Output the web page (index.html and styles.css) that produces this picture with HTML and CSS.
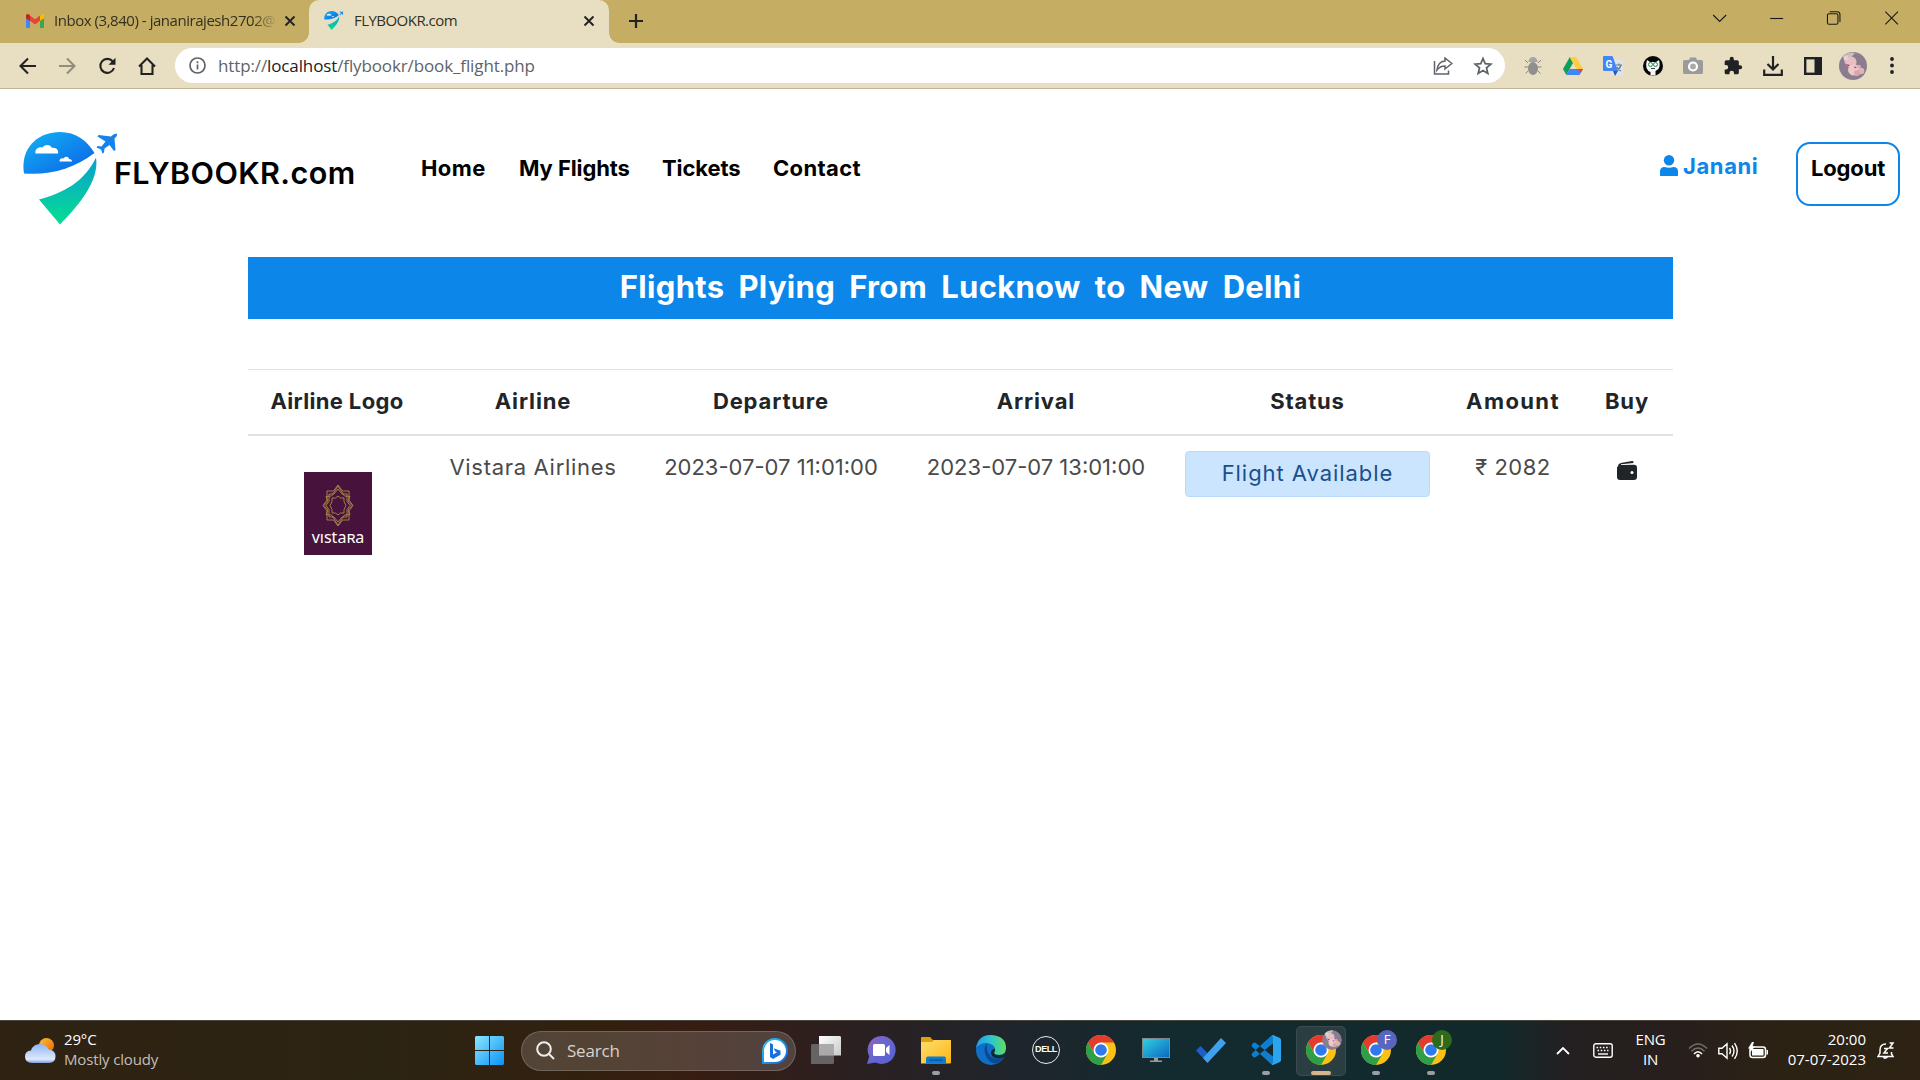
FILE: index.html
```html
<!DOCTYPE html>
<html lang="en">
<head>
<meta charset="utf-8">
<title>FLYBOOKR.com</title>
<link rel="stylesheet" href="styles.css">
</head>
<body>
<svg class="defs" width="0" height="0" aria-hidden="true">
  <defs>
    <linearGradient id="sky" x1="0" y1="0" x2="1" y2="1"><stop offset="0" stop-color="#12b4f5"/><stop offset="1" stop-color="#0b5fe6"/></linearGradient>
    <linearGradient id="sea" x1="0" y1="0" x2="0" y2="1"><stop offset="0" stop-color="#0a9fce"/><stop offset="1" stop-color="#05df92"/></linearGradient>
    <linearGradient id="win" x1="0" y1="0" x2="1" y2="1"><stop offset="0" stop-color="#8be6ff"/><stop offset="1" stop-color="#0a93f5"/></linearGradient>
    <linearGradient id="sun" x1="0" y1="0" x2="1" y2="1"><stop offset="0" stop-color="#f9c02d"/><stop offset="1" stop-color="#ee6410"/></linearGradient>
    <linearGradient id="cloud" x1="0" y1="0" x2="0" y2="1"><stop offset="0" stop-color="#8fb4f3"/><stop offset=".8" stop-color="#dfeafc"/><stop offset="1" stop-color="#7c9ee0"/></linearGradient>
    <linearGradient id="bing" x1="0" y1="0" x2="1" y2="1"><stop offset="0" stop-color="#27c5f3"/><stop offset="1" stop-color="#1560d8"/></linearGradient>
    <linearGradient id="chat" x1="0" y1="0" x2="1" y2="1"><stop offset="0" stop-color="#9a63bb"/><stop offset=".4" stop-color="#6b66cf"/><stop offset="1" stop-color="#5560d6"/></linearGradient>
    <linearGradient id="folder" x1="0" y1="0" x2="1" y2="1"><stop offset="0" stop-color="#ffdd70"/><stop offset="1" stop-color="#fcb713"/></linearGradient>
    <linearGradient id="edge" x1="0" y1="0" x2="1" y2="0"><stop offset="0" stop-color="#1da0e2"/><stop offset=".5" stop-color="#2fc4d0"/><stop offset="1" stop-color="#5fe05a"/></linearGradient>
    <linearGradient id="screen" x1="0" y1="0" x2="1" y2="1"><stop offset="0" stop-color="#32d3dc"/><stop offset="1" stop-color="#0a66c4"/></linearGradient>
    <linearGradient id="pane" x1="0" y1="0" x2="1" y2="1"><stop offset="0" stop-color="#ffffff"/><stop offset="1" stop-color="#c9c9c9"/></linearGradient>
    <symbol id="flylogo" viewBox="0 0 96 93">
      <path fill="url(#sky)" d="M1 41.500C-3 17 14 0 37 0c16 0 27.500 9 34.500 21C50 37 27 43.500 1 41.500z"/>
      <path fill="url(#sea)" d="M73 25.500C77 50 53 76 37 92.500L16 67.500C41 61 62 49 73 25.500z"/>
      <path fill="#fff" d="M12.500 21.500c-1-4 3-7 7-6 3-3.500 8-3 9.500.5 4-1 7 2.500 6 5.500zM36.500 29.500c0-3 2-3.500 4-3 2-2.500 5-2 5.500.5 2 0 3 1 3 2.500z"/>
      <path fill="#1583ea" d="M95.500 1.500c-3-.5-5 .5-7.500 3L75.500 3l-1 1.500 8 5-4 5-4-.5-1 1.500 4.500 2 1.500 4 1.500-1 .5-4 5-3.500 4.500 6 1.500-1-1-11.500c2-2 3-3 2.500-5z"/>
    </symbol>
    <symbol id="chrome" viewBox="0 0 48 48">
      <circle cx="24" cy="24" r="24" fill="#fbc116"/>
      <path fill="#e33b2e" d="M3.200 12A24 24 0 0 1 44.800 12H24L13.600 30z"/>
      <path fill="#2f9e48" d="M3.200 12A24 24 0 0 0 24 48L34.400 30 13.600 30z"/>
      <circle cx="24" cy="24" r="12" fill="#fff"/><circle cx="24" cy="24" r="9.300" fill="#2f78ee"/>
    </symbol>
    <symbol id="x" viewBox="0 0 12 12"><path d="M1.500 1.500l9 9m0-9l-9 9" stroke="#222" stroke-width="1.900"/></symbol>
    <symbol id="avatar" viewBox="0 0 28 28">
      <circle cx="14" cy="14" r="14" fill="#8b7d8f"/><path d="M4 4q6-5 12-3L6 12z" fill="#c9bfb8"/>
      <circle cx="12" cy="10" r="5.500" fill="#e6bfc2"/><circle cx="7" cy="6" r="2.400" fill="#e9cfd0"/><ellipse cx="15.500" cy="18" rx="6.500" ry="5.500" fill="#eccacc"/><circle cx="22" cy="19" r="3.300" fill="#e3b3b6"/><circle cx="18" cy="21" r="3" fill="#dba6aa"/><circle cx="20" cy="14.500" r="1.800" fill="#e2adb2"/><path d="M7 12l4 1-2 1.500zM15 14.500l3 .5-2 1.500z" fill="#b7366b"/>
    </symbol>
  </defs>
</svg>

<div class="tabstrip">
  <div class="tab tab-idle">
    <svg width="18" height="14" viewBox="0 0 18 14"><path fill="#4285f4" d="M0 3h4v11H1.200Q0 14 0 12.800z"/><path fill="#34a853" d="M14 3h4v9.800q0 1.200-1.200 1.200H14z"/><path fill="#ea4335" d="M2 0l7 5.200L16 0l-1 6-6 4.500L3 6z"/><path fill="#c5221f" d="M0 2q0-3 3-1.500L4 1.500V7L0 4.200z"/><path fill="#fbbc04" d="M18 2q0-3-3-1.500l-1 1V7l4-2.800z"/></svg>
    <span class="tab-title fade">Inbox (3,840) - jananirajesh2702@</span>
    <svg width="12" height="12"><use href="#x"/></svg>
  </div>
  <div class="tab tab-active">
    <svg width="20" height="19"><use href="#flylogo"/></svg>
    <span class="tab-title">FLYBOOKR.com</span>
    <svg width="12" height="12"><use href="#x"/></svg>
  </div>
  <svg class="newtab" width="16" height="16" viewBox="0 0 16 16"><path d="M8 1v14M1 8h14" stroke="#222" stroke-width="2.200"/></svg>
  <div class="winctl">
    <svg width="14" height="14" viewBox="0 0 14 14"><path d="M.5 4L7 10.500 13.500 4"/></svg>
    <svg width="14" height="14" viewBox="0 0 14 14"><path d="M.5 7.500h13"/></svg>
    <svg width="14" height="14" viewBox="0 0 14 14"><rect x=".8" y="2.700" width="10.500" height="10.500" rx="1.500"/><path d="M3 .7h7.500q2.800 0 2.800 2.800V11"/></svg>
    <svg width="14" height="14" viewBox="0 0 14 14"><path d="M.7.700l12.600 12.600M13.300.7L.7 13.300"/></svg>
  </div>
</div>

<div class="toolbar">
  <div class="navbtns">
    <svg width="18" height="18" viewBox="0 0 18 18"><path d="M17 9H2M9 1.500L1.500 9 9 16.500"/></svg>
    <svg class="dim" width="18" height="18" viewBox="0 0 18 18"><path d="M1 9h15M9 1.500L16.500 9 9 16.500"/></svg>
    <svg width="18" height="18" viewBox="0 0 18 18"><path d="M14.800 4.500A7 7 0 1 0 16 11"/><path d="M17.500.8v7h-7z" fill="#222" stroke="none"/></svg>
    <svg width="18" height="18" viewBox="0 0 18 18"><path d="M3.500 8v9h11V8M1 9.500L9 1.500l8 8"/></svg>
  </div>
  <div class="omnibox">
    <svg width="17" height="17" viewBox="0 0 17 17" fill="none" stroke="#5f6368" stroke-width="1.700"><circle cx="8.500" cy="8.500" r="7.500"/><path d="M8.500 7.500v5M8.500 4.300v1.900"/></svg>
    <span class="url">http://<b>localhost</b>/flybookr/book_flight.php</span>
    <svg width="20" height="18" viewBox="0 0 20 18" fill="none" stroke="#5f6368" stroke-width="1.500"><path d="M1.500 4v13h14v-3.500M12 1l6.800 5.500L12 12V9q-5 0-8 4Q5 4.500 12 4z"/></svg>
    <svg width="20" height="20" viewBox="0 0 20 20" fill="none" stroke="#5f6368" stroke-width="1.800"><path d="M10 2.500l2.200 5.200 5.600.5-4.300 3.700 1.300 5.500-4.800-2.900-4.800 2.900 1.300-5.500L2.200 8.200l5.600-.5z"/></svg>
  </div>
  <div class="exts">
    <svg width="20" height="20" viewBox="0 0 20 20"><path d="M2 4l3 3M18 4l-3 3M1.500 11h17M2.500 17.500l3-3M17.500 17.500l-3-3" stroke="#8b857a"/><ellipse cx="10" cy="12.500" rx="5" ry="6.500" fill="#8f8f8f"/><path d="M5.500 6a4.500 5 0 0 1 9 0z" fill="#a5a5a5"/></svg>
    <svg width="20" height="18" viewBox="0 0 20 18"><path fill="#109d59" d="M6.800 0L0 12l3.300 6L10 6z"/><path fill="#ffcd40" d="M6.800 0h6.400L20 12h-6.500z"/><path fill="#4285f4" d="M3.300 18L6.700 12H20l-3.400 6z"/><path fill="#ea4335" d="M13.500 12H20l-2 3.500z"/></svg>
    <svg width="20" height="20" viewBox="0 0 20 20"><rect x="8" y="4" width="12" height="15" fill="#dfe3e6"/><path d="M13 9h6M16 7.500V9m2 0q-1 4-5 6m1-4q1 3 4 4" stroke="#607d8b" fill="none" stroke-width="1.200"/><path d="M0 1q0-1 1-1h8.500l5.500 15H1q-1 0-1-1z" fill="#4285f4"/><path d="M10 15h5l-3 5z" fill="#3553a8"/><text x="2.500" y="12" class="gt">G</text></svg>
    <svg width="20" height="20" viewBox="0 0 20 20"><circle cx="10" cy="10" r="10" fill="#070707"/><path d="M4 4l3 2h6l3-2q1.500 6-.5 9l-3 2v4.500h-5V16q-3-1-4-4Q2.500 8 4 4z" fill="#f6f6f6"/><circle cx="7.500" cy="8.500" r="2" fill="none" stroke="#2e8b4d"/><circle cx="12.500" cy="8.500" r="2" fill="none" stroke="#2e8b4d"/><path d="M8 12.500h4" stroke="#444"/></svg>
    <svg width="20" height="18" viewBox="0 0 20 18"><path d="M1.500 3H6l1-2.500h6L14 3h4.500Q20 3 20 4.500v11q0 1.500-1.500 1.500h-17Q0 17 0 15.500v-11Q0 3 1.500 3z" fill="#9c9b9b"/><circle cx="10" cy="9.500" r="4" fill="#aaa" stroke="#fff" stroke-width="2.200"/></svg>
    <svg width="20" height="20" viewBox="0 0 24 24"><path fill="#202124" d="M20.500 11H19V7a2 2 0 0 0-2-2h-4V3.500a2.500 2.500 0 0 0-5 0V5H4a2 2 0 0 0-2 2v3.800h1.500a2.700 2.700 0 0 1 0 5.400H2V20a2 2 0 0 0 2 2h3.800v-1.500a2.700 2.700 0 0 1 5.400 0V22H17a2 2 0 0 0 2-2v-4h1.500a2.500 2.500 0 0 0 0-5z"/></svg>
    <svg width="20" height="20" viewBox="0 0 20 20" fill="none" stroke="#202124" stroke-width="2.200"><path d="M10 0v13M4.500 8l5.500 5.500L15.500 8M1.200 13.500v5.300h17.600v-5.300"/></svg>
    <svg width="18" height="18" viewBox="0 0 18 18"><rect x="1.200" y="1.200" width="15.600" height="15.600" fill="none" stroke="#202124" stroke-width="2.400"/><path d="M10.500 1h6v16h-6z" fill="#202124"/></svg>
    <svg width="28" height="28"><use href="#avatar"/></svg>
    <svg width="4" height="17" viewBox="0 0 4 17" fill="#202124"><circle cx="2" cy="2" r="1.900"/><circle cx="2" cy="8.500" r="1.900"/><circle cx="2" cy="15" r="1.900"/></svg>
  </div>
</div>

<main class="page">
  <header class="site-head">
    <svg class="logo" width="96" height="93"><use href="#flylogo"/></svg>
    <div class="brand">FLYBOOKR.com</div>
    <nav class="menu"><a class="home">Home</a><a class="my">My Flights</a><a class="tick">Tickets</a><a class="cont">Contact</a></nav>
    <div class="user"><svg width="18" height="21" viewBox="0 0 18 21" fill="#0d86ea"><circle cx="9" cy="5.300" r="5.200"/><path d="M0 20.500v-4q0-4.500 4.500-4.500Q9 13.500 13.500 12q4.500 0 4.500 4.500v4q0 .5-1 .5H1q-1 0-1-.5z"/></svg>Janani</div>
    <div class="logout">Logout</div>
  </header>
  <section class="results">
    <h1 class="banner">Flights Plying From Lucknow to New Delhi</h1>
    <table class="flights">
      <colgroup><col class="c1"><col class="c2"><col class="c3"><col class="c4"><col class="c5"><col class="c6"><col class="c7"></colgroup>
      <thead><tr><th class="snug">Airline Logo</th><th>Airline</th><th>Departure</th><th>Arrival</th><th>Status</th><th class="wide">Amount</th><th>Buy</th></tr></thead>
      <tbody><tr>
        <td>
          <svg class="airline-logo" width="68" height="83" viewBox="0 0 68 83"><rect width="68" height="83" fill="#47133c"/>
            <g fill="none" stroke="#b08a45" stroke-width=".9"><path d="M34 13l4.500 6h6.500v9l4 5.500-4 5.500v9h-6.500L34 54l-4.500-6H23v-9l-4-5.500 4-5.500v-9h6.500z"/><path d="M34 17l4 5h5v7.500l3 4-3 4V45h-5l-4 5-4-5h-5v-7.500l-3-4 3-4V22h5z"/><path d="M34 14l-6.500 10-5.500.5 2 4.500-4 4.500 4 4.500-2 4.500 5.500.5L34 53l6.500-10 5.500-.5-2-4.500 4-4.500-4-4.500 2-4.500-5.500-.5z"/><path d="M34 24l2.500 2H40v3.500l2 4-2 4V41h-3.500L34 43l-2.500-2H28v-3.500l-2-4 2-4V26h3.500z"/></g>
            <text x="34" y="71" class="vistara">vıstaʀa</text></svg>
        </td>
        <td class="name">Vistara Airlines</td><td>2023-07-07 11:01:00</td><td>2023-07-07 13:01:00</td>
        <td><div class="badge">Flight Available</div></td>
        <td class="amount">₹ 2082</td>
        <td><svg class="wallet" width="20" height="19" viewBox="0 0 20 19"><path fill="#212529" d="M1 5.500Q1 2.500 5 1.800L15 .1q1.500-.2 1.500 1.400L16.500 2 4 3.300v.7L17 3.700q3 0 3 3V16q0 3-3 3H3q-3 0-3-3V6z"/><circle cx="15" cy="11.500" r="1.500" fill="#fff"/></svg></td>
      </tr></tbody>
    </table>
  </section>
</main>

<footer class="taskbar">
  <div class="weather">
    <svg width="31" height="26" viewBox="0 0 31 26"><circle cx="21.500" cy="7.500" r="7.500" fill="url(#sun)"/><path fill="url(#cloud)" d="M7 25q-7 0-7-6.500Q0 13 6 12.500 8 6 15 6q6 0 8.500 5.500 7 .5 7 7T24 25z"/></svg>
    <div class="lift"><div>29°C</div><div class="soft">Mostly cloudy</div></div>
  </div>
  <svg class="start" width="29" height="29" viewBox="0 0 29 29"><path fill="url(#win)" d="M1 0h13v14H0V1zM15 0h13l1 1v13H15zM0 15h14v14H1l-1-1zM15 15h14v13l-1 1H15z"/></svg>
  <div class="search">
    <svg width="19" height="19" viewBox="0 0 19 19" fill="none" stroke="#eee" stroke-width="2"><circle cx="8" cy="8" r="6.800"/><path d="M13 13l5 5"/></svg>
    <span>Search</span>
    <svg width="26" height="26" viewBox="0 0 26 26"><path d="M1 25V13A12 12 0 1 1 13 25z" fill="#fff" stroke="url(#bing)" stroke-width="2"/><path fill="#1a6fe0" d="M8 5l3 1.200v10.300l4-2.200-2-1-1.200-3 6.700 2.500v4L11 21l-3-2z"/></svg>
  </div>
  <div class="apps">
    <div class="app"><svg width="30" height="28" viewBox="0 0 30 28"><path d="M8 0h21l1 1v18.500H8z" fill="url(#pane)"/><path d="M1 8h22v19l-1 1H0V9z" fill="#707070" opacity=".85"/><path d="M8 8h15v11.500H8z" fill="#aaa"/></svg></div>
    <div class="app"><svg width="29" height="28" viewBox="0 0 29 28"><path fill="url(#chat)" d="M14.500 0a14 14 0 1 1-6 26.600L0 28l2.200-7.500A14 14 0 0 1 14.500 0z"/><rect x="6" y="8" width="12" height="12" rx="1.500" fill="#fff"/><path d="M19 12l3.500-3v10L19 16z" fill="#fff"/></svg></div>
    <div class="app run"><svg width="30" height="27" viewBox="0 0 30 27"><path d="M0 1q0-1 1-1h8l3 3H29q1 0 1 1v6H0z" fill="#e0a008"/><path d="M0 5h11l2-2h16.500l.5.500V26l-1 .5H0z" fill="url(#folder)"/><path d="M5 26.500v-5q0-2 2-2h16q2 0 2 2v5z" fill="#0c7bd4"/><path d="M8.500 23h13" stroke="#0a4f94" stroke-width="1.300"/></svg></div>
    <div class="app"><svg width="30" height="30" viewBox="0 0 30 30"><circle cx="15" cy="15" r="15" fill="#0f6fc8"/><path fill="url(#edge)" d="M0 13Q2 0 15 0q15 1 15 13 0 7-7 7-5 0-5-2.500 1.500-2 1-4Q18 9 11 8 4 8 0 13z"/><path fill="#0b4b96" d="M11 8q-4 5-1.500 12t9 8.500q6-.5 9-6-7 3-12-.5Q9.500 17 11 8z"/><path fill="#112b30" d="M30 14q0 6-7 6-5 0-5-2.500 1.500-2 1-4Q14 15 15 19q2 5 9 4.500 4-1 6-2z"/></svg></div>
    <div class="app dell"><span>DELL</span></div>
    <div class="app"><svg width="30" height="30"><use href="#chrome"/></svg></div>
    <div class="app"><svg width="28" height="24" viewBox="0 0 28 24"><rect x=".5" y=".5" width="27" height="19" fill="url(#screen)" stroke="#7c8a90"/><path d="M12 20h4v2.500h4V24H8v-1.500h4z" fill="#9a9a9a"/></svg></div>
    <div class="app"><svg width="30" height="25" viewBox="0 0 30 25"><path d="M0 12.500L4.500 8 12 15.500l-1 9z" fill="#1f5fc4"/><path d="M7 20L25 0l5 5-18.500 20z" fill="#3fa0ee"/></svg></div>
    <div class="app run"><svg width="30" height="30" viewBox="0 0 30 30"><path fill="#0e7fcf" d="M22 0l-2 1L.8 18.500v2L3 22.500l1.500-.3L22 8.500zM22 30l-2-1L.8 11.500v-2L3 7.500l1.500.3L22 21.500z"/><path fill="#2aa5ee" d="M22 0l7 3 1 1.500v21L29 27l-7 3q-1 0-1.500-1 1.500 0 1.500-2V3q0-2-1.500-2z"/></svg></div>
    <div class="app run current"><svg width="30" height="30"><use href="#chrome"/></svg><svg class="who" width="20" height="20"><use href="#avatar" width="20" height="20"/></svg></div>
    <div class="app run"><svg width="30" height="30"><use href="#chrome"/></svg><span class="who who-f">F</span></div>
    <div class="app run"><svg width="30" height="30"><use href="#chrome"/></svg><span class="who who-j">J</span></div>
  </div>
  <div class="tray">
    <svg class="chev" width="14" height="9" viewBox="0 0 14 9" fill="none" stroke="#fff" stroke-width="1.800"><path d="M1 8l6-6 6 6"/></svg>
    <svg class="kbd" width="20" height="15" viewBox="0 0 20 15" fill="none" stroke="#fff" stroke-width="1.400"><rect x=".8" y=".8" width="18.400" height="13.400" rx="2"/><path d="M3.500 4.500h13M4.500 7.500h11" stroke-dasharray="1.600 1.600"/><path d="M5 11h10"/></svg>
    <div class="lang lift">ENG<br>IN</div>
    <svg class="wifi" width="20" height="15" viewBox="0 0 20 15" fill="none" stroke="#fff" stroke-width="1.500"><path d="M1 5.500q9-9 18 0M3.500 8.300q6.500-6.500 13 0" opacity=".35"/><path d="M6 11q4-4.500 8 0"/><circle cx="10" cy="12.700" r="1.800" fill="#fff" stroke="none"/></svg>
    <svg class="vol" width="20" height="18" viewBox="0 0 20 18" fill="none" stroke="#fff" stroke-width="1.400"><path d="M.8 6.200H4L9 1.800v14.400L4 11.800H.8zM11.500 6q2 3 0 6M14 3.500q4 5.500 0 11M16.500 1.200q5.500 7.800 0 15.600"/></svg>
    <svg class="batt" width="21" height="17" viewBox="0 0 21 17"><rect x="2" y="5" width="15.500" height="10.500" rx="2.500" fill="none" stroke="#fff" stroke-width="1.500"/><rect x="4" y="7" width="11.500" height="6.500" fill="#fff"/><path d="M18.500 8h1.500v4.500h-1.500zM4 0L0 6.500h2.500L1.500 11 7 4.500H4.500L6 0z" fill="#fff"/></svg>
    <div class="clock lift">20:00<br>07-07-2023</div>
    <svg class="bell" width="18" height="18" viewBox="0 0 18 18" fill="none" stroke="#fff" stroke-width="1.500"><path d="M9 2Q3 2 3 8v3l-2 3.500h15L14.500 12v-2M6.500 15q1 2.500 4 0M7 6.500h3.500L7 11h4M12.500 1H16l-3.500 5h4"/></svg>
  </div>
</footer>
</body>
</html>
```

FILE: styles.css
```css
* { box-sizing: border-box; }
html, body { height: 100%; }
body {
  margin: 0;
  display: flex;
  flex-direction: column;
  height: 1080px;
  overflow: hidden;
  background: #fff;
  font-family: Inter, "Noto Sans", sans-serif;
}
svg { display: block; flex: none; }
.defs { position: absolute; }

/* Browser tab strip */
.tabstrip {
  flex: none;
  display: flex;
  height: 43px;
  background: #c5ae64;
  font-family: "Open Sans", "Noto Sans", sans-serif;
}
.tab { display: flex; align-items: center; padding-bottom: 2px; }
.tab-idle { width: 309px; padding-left: 26px; }
.tab-active {
  position: relative;
  width: 300px;
  padding-left: 15px;
  background: #e8dfc3;
  border-radius: 10px 10px 0 0;
}
.tab-active::before, .tab-active::after {
  content: "";
  position: absolute;
  bottom: 0;
  width: 10px;
  height: 10px;
}
.tab-active::before { left: -10px; background: radial-gradient(circle at 0 0, transparent 9.500px, #e8dfc3 10px); }
.tab-active::after { right: -10px; background: radial-gradient(circle at 100% 0, transparent 9.500px, #e8dfc3 10px); }
.tab-title {
  flex: none;
  width: 226px;
  margin: 0 4px 0 10px;
  padding-bottom: 2px;
  white-space: nowrap;
  font-size: 15px;
  line-height: 20px;
  letter-spacing: -.46px;
  color: #33301f;
}
.tab-active .tab-title { width: 219px; margin: 0 10px; letter-spacing: -.54px; }
.fade { -webkit-mask-image: linear-gradient(90deg, #000 88%, transparent 99%); mask-image: linear-gradient(90deg, #000 88%, transparent 99%); }
.newtab { margin: 13px 0 0 19px; }
.winctl { display: flex; margin-left: auto; padding-bottom: 7px; }
.winctl svg { width: 57.300px; height: 14px; margin-top: 11px; fill: none; stroke: #1a1a1a; stroke-width: 1.100; }

/* Address bar */
.toolbar {
  flex: none;
  display: flex;
  align-items: center;
  height: 46px;
  background: #e8dfc3;
  border-bottom: 1px solid #bdb49a;
}
.navbtns { display: flex; padding-left: 8px; fill: none; stroke: #222; stroke-width: 2.100; }
.navbtns svg { width: 40px; height: 18px; }
.navbtns svg:nth-child(n+2) { position: relative; left: -1px; }
.navbtns .dim { stroke: #928c7c; }
.omnibox {
  display: flex;
  align-items: center;
  width: 1330px;
  height: 35px;
  margin-left: 7px;
  padding-left: 14px;
  border-radius: 18px;
  background: #fff;
}
.url {
  width: 1227px;
  padding-left: 12px;
  font: 17px/24px "Open Sans", "Noto Sans", sans-serif;
  letter-spacing: -.12px;
  color: #5f6368;
}
.url b { font-weight: 400; color: #202124; }
.omnibox svg:last-child { margin-left: 20px; }
.exts { display: flex; align-items: center; padding-left: 8px; }
.exts svg { margin: 0 10px; }
.exts svg:nth-child(8) { margin: 0 11px; }
.exts svg:nth-child(9) { margin: 0 6px; }
.exts svg:nth-child(10) { margin: 0 17px; }
.gt { font: 700 10px Roboto, sans-serif; fill: #fff; }

/* Site header */
.page { flex: 1; display: flex; flex-direction: column; }
.site-head { display: flex; align-items: flex-start; height: 168px; padding: 0 20px 0 23px; }
.logo { margin-top: 43px; }
.brand {
  width: 294px;
  margin: 64px 0 0 -6px;
  font-weight: 560;
  font-size: 30.500px;
  line-height: 40px;
  letter-spacing: .4px;
  white-space: nowrap;
  padding-left: 1px;
}
.menu { display: flex; margin: 64px 0 0 14px; font: 700 22px/30px Inter, sans-serif; white-space: nowrap; }
.menu a { letter-spacing: -.1px; }
.menu .home { width: 98px; letter-spacing: .4px; }
.menu .my { width: 143px; }
.menu .tick { width: 111px; }
.menu .cont { letter-spacing: .35px; }
.user {
  display: flex;
  gap: 5px;
  width: 98px;
  margin: 62px 0 0 auto;
  font: 700 22px/30px Inter, sans-serif;
  letter-spacing: .6px;
  color: #0d86ea;
}
.user svg { margin-top: 4px; }
.logout {
  width: 104px;
  height: 64px;
  margin: 53px 0 0 38px;
  padding-top: 9px;
  border: 2px solid #0d86ea;
  border-radius: 14px;
  font: 700 22px/30px Inter, sans-serif;
  letter-spacing: -.15px;
  text-align: center;
}

/* Search results */
.results { width: 1425px; margin-left: 248px; }
.banner {
  height: 62px;
  margin: 0 0 50px;
  background: #0d86ea;
  font-weight: 680;
  font-size: 31px;
  line-height: 60px;
  letter-spacing: .3px;
  word-spacing: 6.500px;
  text-align: center;
  color: #fff;
}
.flights { width: 1425px; table-layout: fixed; border-collapse: separate; border-spacing: 0; text-align: center; font-size: 22px; white-space: nowrap; }
.c1 { width: 178px; }
.c2 { width: 214px; }
.c3 { width: 262px; }
.c4 { width: 268px; }
.c5 { width: 275px; }
.c6 { width: 136px; }
.c7 { width: 92px; }
.flights th {
  height: 67px;
  padding: 0 0 3px;
  border-top: 1px solid #dee2e6;
  border-bottom: 2px solid #dee2e6;
  font-weight: 700;
  letter-spacing: .85px;
  color: #212529;
}
.flights .snug { letter-spacing: .35px; }
.flights .wide { letter-spacing: 1.400px; }
.flights td { padding: 15px 0 0; vertical-align: top; line-height: 32px; font-weight: 400; color: #4a4a4a; }
.flights .name { letter-spacing: .7px; }
.flights .amount { letter-spacing: .5px; }
.airline-logo { margin: 21px auto 0; position: relative; left: .5px; }
.vistara { font: 400 16px "Noto Sans", sans-serif; text-anchor: middle; fill: #fff; }
.badge {
  width: 245px;
  height: 46px;
  margin: 0 auto;
  border: 1px solid #b8daff;
  border-radius: 4px;
  background: #cce5ff;
  line-height: 43px;
  letter-spacing: .95px;
  color: #1a4f8c;
}
.wallet { margin: 10px auto 0; }

/* Windows taskbar */
.taskbar {
  flex: none;
  display: flex;
  align-items: center;
  height: 60px;
  border-top: 1px solid #47443a;
  background: linear-gradient(90deg, #2f2212 0, #2c2413 20%, #33200f 31%, #371d12 36%, #2a2022 45%, #1f252c 53%, #132a2f 60%, #12292c 78%, #241f20 82%, #281f1c 88%, #2c2213 93%, #2d2213 100%);
  font: 15px/20px "Open Sans", "Noto Sans", sans-serif;
  color: #fff;
}
.lift { padding-bottom: 4px; }
.weather { display: flex; align-items: center; gap: 8px; width: 475px; padding-left: 25px; letter-spacing: -.15px; }
.soft { color: #c3bfb8; }
.start { margin-right: 17px; }
.search {
  display: flex;
  align-items: center;
  width: 275px;
  height: 40px;
  padding: 0 7px 0 14px;
  border: 1px solid rgba(255, 255, 255, .18);
  border-radius: 20px;
  background: rgba(255, 255, 255, .16);
  font-size: 17px;
  letter-spacing: -.2px;
  color: #d8d2ce;
}
.search span { margin: 0 auto 0 12px; }
.apps { display: flex; gap: 5px; margin-left: 5px; }
.app { position: relative; display: flex; align-items: center; justify-content: center; width: 50px; height: 50px; padding-bottom: 1px; }
.dell span {
  width: 28px;
  height: 28px;
  border: 1.600px solid #e8ecec;
  border-radius: 50%;
  font: 700 9px/25px "Liberation Sans", sans-serif;
  letter-spacing: -.4px;
  text-align: center;
}
.run::after {
  content: "";
  position: absolute;
  bottom: 1px;
  width: 8px;
  height: 4px;
  border-radius: 2px;
  background: #98a0a2;
}
.current { border-radius: 5px; background: rgba(255, 255, 255, .1); box-shadow: inset 0 0 0 1px rgba(255, 255, 255, .07); }
.current::after { width: 20px; background: #d8b48a; }
.who {
  position: absolute;
  top: 4px;
  right: 4px;
  width: 20px;
  height: 20px;
  border-radius: 50%;
  font: 13px/19px "Open Sans", sans-serif;
  text-align: center;
}
.who-f { background: #5866bd; }
.who-j { background: #2d6a1c; }
.tray { display: flex; align-items: center; margin-left: auto; padding-right: 25px; }
.kbd { margin-left: 23px; }
.lang { width: 31px; margin-left: 22px; text-align: center; letter-spacing: -.2px; }
.wifi { margin-left: 22px; }
.vol { margin-left: 10px; }
.batt { margin-left: 10px; }
.clock { width: 80px; margin-left: 17px; text-align: right; }
.bell { margin-left: 11px; }
```
